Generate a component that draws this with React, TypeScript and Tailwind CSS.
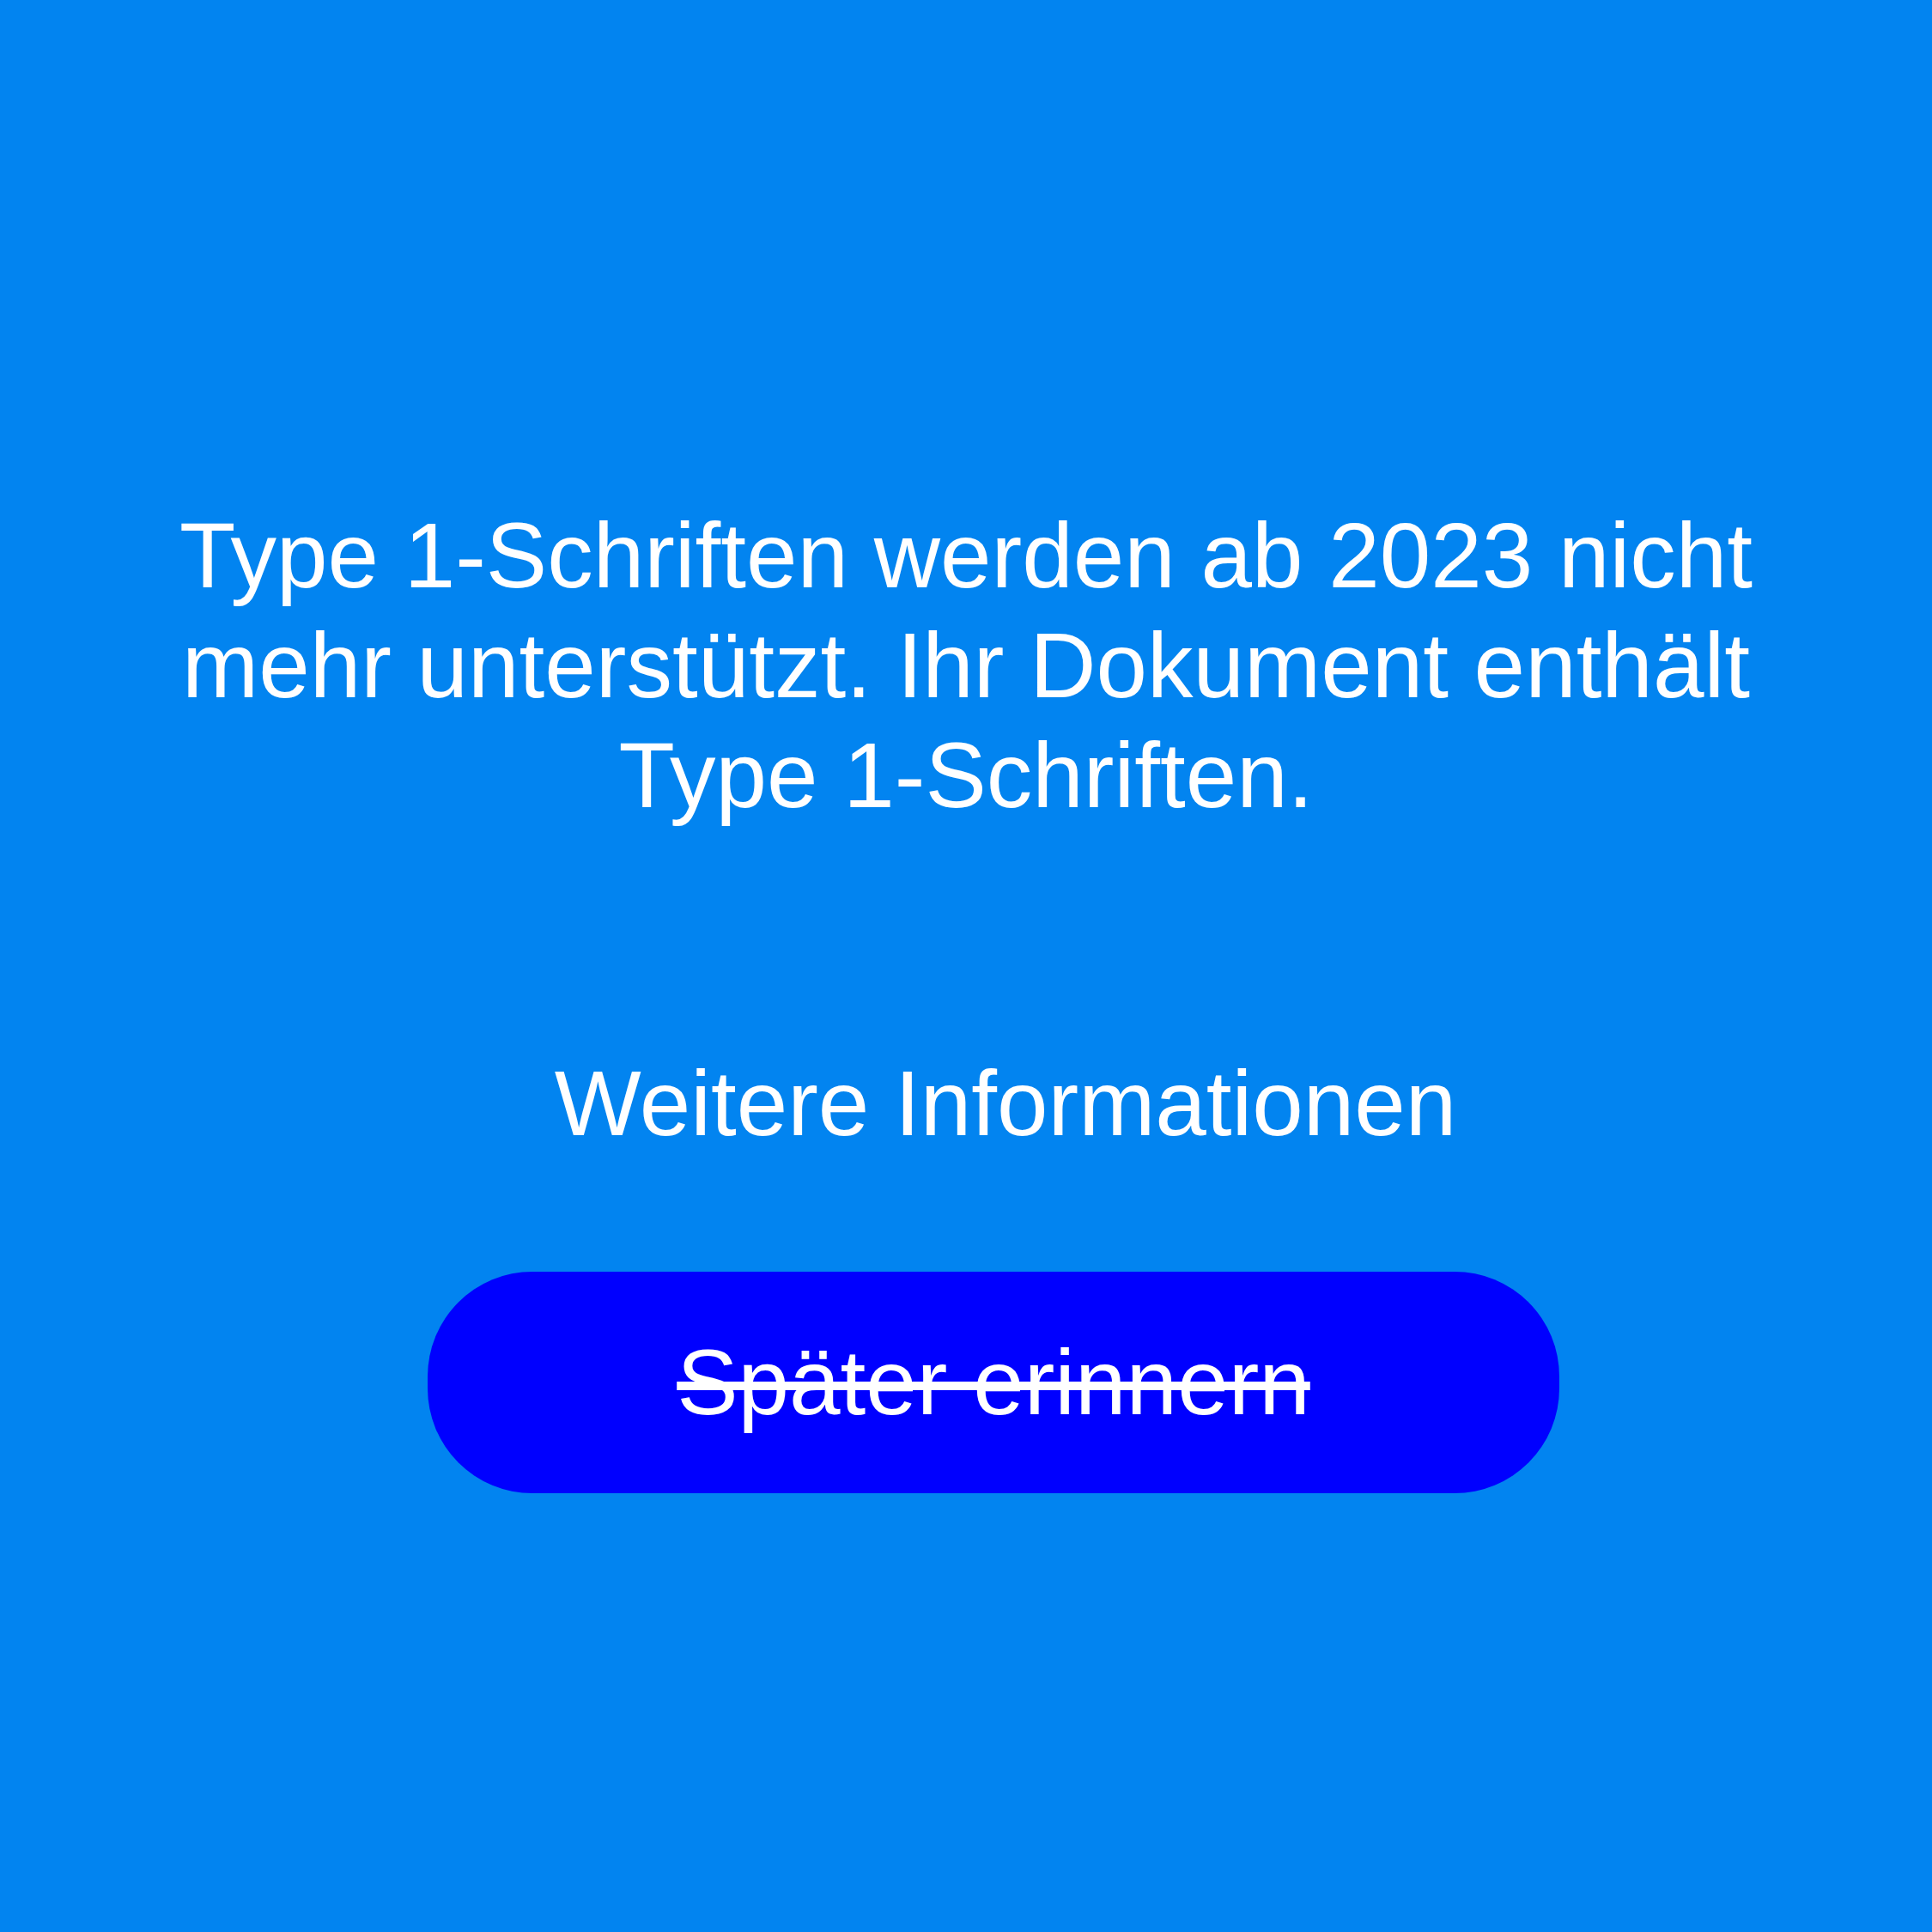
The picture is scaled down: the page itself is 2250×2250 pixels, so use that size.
export default function App() {
  return (
    <div
      className="w-[2250px] h-[2250px] bg-[#0284f0] flex flex-col items-center pt-[583px] text-white"
      style={{ fontFamily: '"Liberation Sans", Arial, sans-serif' }}
    >
      <p className="w-[1880px] text-center text-[107px] leading-[128px]">
        Type 1-Schriften werden ab 2023 nicht mehr unterstützt. Ihr Dokument enthält Type 1-Schriften.
      </p>
      <a className="mt-[254px] ml-[92px] text-[107px] leading-[128px] text-center">Weitere Informationen</a>
      <button className="mt-[132px] ml-[64px] w-[1318px] h-[258px] rounded-[122px] bg-[#0000ff] text-white text-[107px] leading-[128px] line-through flex items-center justify-center">
        Später erinnern
      </button>
    </div>
  );
}
